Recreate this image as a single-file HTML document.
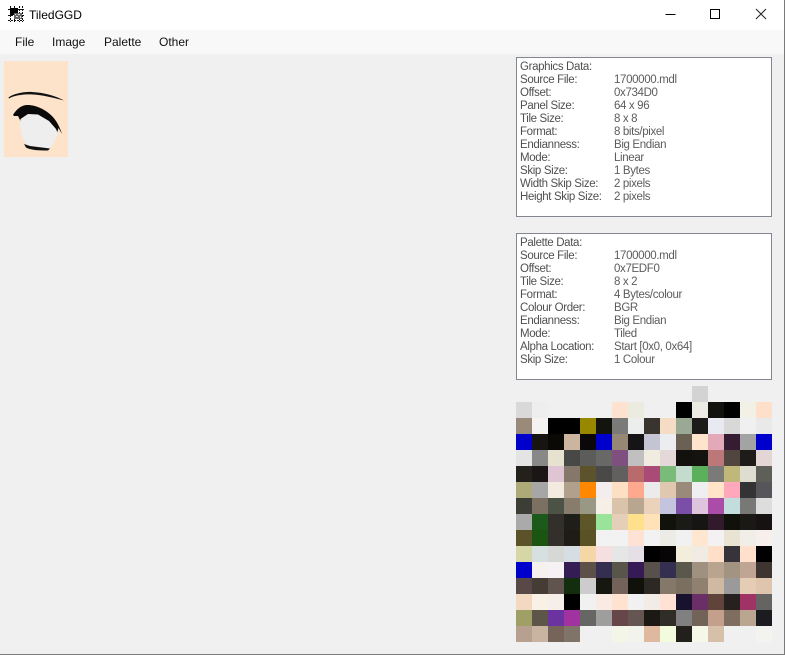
<!DOCTYPE html>
<html>
<head>
<meta charset="utf-8">
<style>
html,body{margin:0;padding:0;width:785px;height:655px;overflow:hidden;background:#f0f0f0;font-family:"Liberation Sans",sans-serif;}
.abs{position:absolute;}
#title{left:0;top:0;width:785px;height:30px;background:#fff;}
#ttext{left:29px;top:7px;font-size:12px;line-height:16px;color:#000;}
#menu{left:0;top:30px;width:785px;height:24px;background:#f8f8f8;}
.m{position:absolute;top:35px;font-size:12px;line-height:14px;color:#111;}
.box{position:absolute;left:516px;width:254px;background:#fff;border:1px solid #828790;}
.t{position:absolute;margin-top:1px;font-size:11.5px;letter-spacing:-0.35px;line-height:13px;color:#505050;white-space:nowrap;}
.v{color:#5c5c5c;}
#rb{left:784px;top:0;width:1px;height:655px;background:#7a7a7a;}
#bb{left:0;top:654px;width:785px;height:1px;background:#7a7a7a;}
</style>
</head>
<body>
<div class="abs" id="title"></div>
<svg class="abs" style="left:7px;top:5px" width="18" height="18" viewBox="7 5 18 18" shape-rendering="crispEdges">
<path d="M10.500 6v16M14.500 6v16M19.500 6v16M22.500 6v16M8 9.500h16M8 15.500h16M8 20.500h16" stroke="#111" stroke-width="1" stroke-dasharray="2 1" fill="none"/>
<rect x="10" y="8" width="8" height="7" fill="#000"/>
<rect x="14" y="13" width="8" height="6" fill="#666"/>
<path d="M15 14h1v1h-1zM18 14h2v1h-2zM16 16h2v1h-2zM20 16h1v2h-1z" fill="#ddd"/>
</svg>
<div class="abs" id="ttext">TiledGGD</div>
<svg class="abs" style="left:660px;top:0" width="125" height="30" viewBox="0 0 125 30">
<path d="M5.500 14.500h10" stroke="#000" stroke-width="1" fill="none"/>
<rect x="50.500" y="9.500" width="9" height="9" stroke="#000" stroke-width="1" fill="none"/>
<path d="M96 9l10 10M106 9l-10 10" stroke="#222" stroke-width="1" fill="none"/>
</svg>
<div class="abs" id="menu"></div>
<div class="m" style="left:15px">File</div>
<div class="m" style="left:52px">Image</div>
<div class="m" style="left:104px">Palette</div>
<div class="m" style="left:159px">Other</div>

<svg class="abs" style="left:4px;top:61px" width="64" height="96" viewBox="4 61 64 96">
<rect x="4" y="61" width="64" height="96" fill="#fee3cb"/>
<path d="M8.500 97.500C14 93.500 24 91.500 32 92C44 92.500 56 96 64 100.500C54 97.800 42 94.800 31 94.400C22 94.200 14 95.500 9 98.500Z" fill="#111"/>
<path d="M13 115C16 110 20 106 26 105C36 104.500 46 110 52 116C57 121 60 128 62 134L58.500 128L57 133L49 122L38 115L28 115L21 122L18 116L14 116Z" fill="#0a0a0a"/>
<path d="M20.500 119L28 114L38 114.500L49 121L56 129L58 134L54 142L50 149L26 145L22 136L20 126Z" fill="#eeeeee"/>
<path d="M24 144L30 146L50 148.500L48 150.500C38 150.500 30 150 26 147.500Z" fill="#111"/>
</svg>

<div class="box" style="top:57px;height:158px"></div>
<div class="t" style="left:520px;top:60px">Graphics Data:</div>
<div class="t" style="left:520px;top:73px">Source File:</div><div class="t v" style="left:614px;top:73px">1700000.mdl</div>
<div class="t" style="left:520px;top:86px">Offset:</div><div class="t v" style="left:614px;top:86px">0x734D0</div>
<div class="t" style="left:520px;top:99px">Panel Size:</div><div class="t v" style="left:614px;top:99px">64 x 96</div>
<div class="t" style="left:520px;top:112px">Tile Size:</div><div class="t v" style="left:614px;top:112px">8 x 8</div>
<div class="t" style="left:520px;top:125px">Format:</div><div class="t v" style="left:614px;top:125px">8 bits/pixel</div>
<div class="t" style="left:520px;top:138px">Endianness:</div><div class="t v" style="left:614px;top:138px">Big Endian</div>
<div class="t" style="left:520px;top:151px">Mode:</div><div class="t v" style="left:614px;top:151px">Linear</div>
<div class="t" style="left:520px;top:164px">Skip Size:</div><div class="t v" style="left:614px;top:164px">1 Bytes</div>
<div class="t" style="left:520px;top:177px">Width Skip Size:</div><div class="t v" style="left:614px;top:177px">2 pixels</div>
<div class="t" style="left:520px;top:190px">Height Skip Size:</div><div class="t v" style="left:614px;top:190px">2 pixels</div>

<div class="box" style="top:233px;height:145px"></div>
<div class="t" style="left:520px;top:236px">Palette Data:</div>
<div class="t" style="left:520px;top:249px">Source File:</div><div class="t v" style="left:614px;top:249px">1700000.mdl</div>
<div class="t" style="left:520px;top:262px">Offset:</div><div class="t v" style="left:614px;top:262px">0x7EDF0</div>
<div class="t" style="left:520px;top:275px">Tile Size:</div><div class="t v" style="left:614px;top:275px">8 x 2</div>
<div class="t" style="left:520px;top:288px">Format:</div><div class="t v" style="left:614px;top:288px">4 Bytes/colour</div>
<div class="t" style="left:520px;top:301px">Colour Order:</div><div class="t v" style="left:614px;top:301px">BGR</div>
<div class="t" style="left:520px;top:314px">Endianness:</div><div class="t v" style="left:614px;top:314px">Big Endian</div>
<div class="t" style="left:520px;top:327px">Mode:</div><div class="t v" style="left:614px;top:327px">Tiled</div>
<div class="t" style="left:520px;top:340px">Alpha Location:</div><div class="t v" style="left:614px;top:340px">Start [0x0, 0x64]</div>
<div class="t" style="left:520px;top:353px">Skip Size:</div><div class="t v" style="left:614px;top:353px">1 Colour</div>

<svg class="abs" style="left:516px;top:386px" width="256" height="256" viewBox="0 0 16 16" shape-rendering="crispEdges">
<rect x="11" y="0" width="1" height="1" fill="#d3d3d3"/>
<g transform="translate(0,1)"><rect x="0" width="1" height="1" fill="#d9d9d9"/><rect x="1" width="1" height="1" fill="#eeeeee"/><rect x="6" width="1" height="1" fill="#fde2d0"/><rect x="7" width="1" height="1" fill="#ecebdf"/><rect x="10" width="1" height="1" fill="#000000"/><rect x="11" width="1" height="1" fill="#eceae3"/><rect x="12" width="1" height="1" fill="#12110d"/><rect x="13" width="1" height="1" fill="#000000"/><rect x="14" width="1" height="1" fill="#f3f1e5"/><rect x="15" width="1" height="1" fill="#fedfc9"/></g>
<g transform="translate(0,2)"><rect x="0" width="1" height="1" fill="#9a8a7a"/><rect x="1" width="1" height="1" fill="#f5f3f1"/><rect x="2" width="1" height="1" fill="#000000"/><rect x="3" width="1" height="1" fill="#000000"/><rect x="4" width="1" height="1" fill="#988800"/><rect x="5" width="1" height="1" fill="#14140f"/><rect x="6" width="1" height="1" fill="#7a7a78"/><rect x="7" width="1" height="1" fill="#eceeee"/><rect x="8" width="1" height="1" fill="#3a342e"/><rect x="9" width="1" height="1" fill="#f5dcc4"/><rect x="10" width="1" height="1" fill="#9aa994"/><rect x="11" width="1" height="1" fill="#1c1b19"/><rect x="12" width="1" height="1" fill="#e9e9f2"/><rect x="13" width="1" height="1" fill="#d8d8d8"/><rect x="14" width="1" height="1" fill="#f0f0f0"/><rect x="15" width="1" height="1" fill="#e9e9e9"/></g>
<g transform="translate(0,3)"><rect x="0" width="1" height="1" fill="#0000cc"/><rect x="1" width="1" height="1" fill="#171412"/><rect x="2" width="1" height="1" fill="#0a0906"/><rect x="3" width="1" height="1" fill="#cbb59e"/><rect x="4" width="1" height="1" fill="#0a0808"/><rect x="5" width="1" height="1" fill="#0000cc"/><rect x="6" width="1" height="1" fill="#968874"/><rect x="7" width="1" height="1" fill="#161415"/><rect x="8" width="1" height="1" fill="#c4c4d3"/><rect x="9" width="1" height="1" fill="#ecedf0"/><rect x="10" width="1" height="1" fill="#6b6054"/><rect x="11" width="1" height="1" fill="#fee3cd"/><rect x="12" width="1" height="1" fill="#e3a9b9"/><rect x="13" width="1" height="1" fill="#351c33"/><rect x="14" width="1" height="1" fill="#a3a3a3"/><rect x="15" width="1" height="1" fill="#0000cc"/></g>
<g transform="translate(0,4)"><rect x="0" width="1" height="1" fill="#e4e4e4"/><rect x="1" width="1" height="1" fill="#888888"/><rect x="2" width="1" height="1" fill="#e7e1d0"/><rect x="3" width="1" height="1" fill="#484846"/><rect x="4" width="1" height="1" fill="#5c5c5a"/><rect x="5" width="1" height="1" fill="#686866"/><rect x="6" width="1" height="1" fill="#7f4f7f"/><rect x="7" width="1" height="1" fill="#c0c0c0"/><rect x="8" width="1" height="1" fill="#f0ede0"/><rect x="9" width="1" height="1" fill="#e5d8d8"/><rect x="10" width="1" height="1" fill="#12110e"/><rect x="11" width="1" height="1" fill="#14130f"/><rect x="12" width="1" height="1" fill="#bc7878"/><rect x="13" width="1" height="1" fill="#50453f"/><rect x="14" width="1" height="1" fill="#1f1b18"/><rect x="15" width="1" height="1" fill="#e5d6d6"/></g>
<g transform="translate(0,5)"><rect x="0" width="1" height="1" fill="#24211c"/><rect x="1" width="1" height="1" fill="#1a1615"/><rect x="2" width="1" height="1" fill="#dfc5d3"/><rect x="3" width="1" height="1" fill="#85786a"/><rect x="4" width="1" height="1" fill="#5c532c"/><rect x="5" width="1" height="1" fill="#4a4947"/><rect x="6" width="1" height="1" fill="#61605e"/><rect x="7" width="1" height="1" fill="#b96b6b"/><rect x="8" width="1" height="1" fill="#aa4b77"/><rect x="9" width="1" height="1" fill="#7abb7a"/><rect x="10" width="1" height="1" fill="#c3dcce"/><rect x="11" width="1" height="1" fill="#5bb05b"/><rect x="12" width="1" height="1" fill="#7a7a78"/><rect x="13" width="1" height="1" fill="#bfb878"/><rect x="14" width="1" height="1" fill="#deddd0"/><rect x="15" width="1" height="1" fill="#5f5f5a"/></g>
<g transform="translate(0,6)"><rect x="0" width="1" height="1" fill="#aeaa78"/><rect x="1" width="1" height="1" fill="#a6a6a6"/><rect x="2" width="1" height="1" fill="#f3ebe0"/><rect x="3" width="1" height="1" fill="#b0a08c"/><rect x="4" width="1" height="1" fill="#ff8800"/><rect x="5" width="1" height="1" fill="#f3eded"/><rect x="6" width="1" height="1" fill="#fde0c3"/><rect x="7" width="1" height="1" fill="#ffa890"/><rect x="8" width="1" height="1" fill="#ebebeb"/><rect x="9" width="1" height="1" fill="#e0c8b0"/><rect x="10" width="1" height="1" fill="#9a8a7a"/><rect x="11" width="1" height="1" fill="#efeef0"/><rect x="12" width="1" height="1" fill="#ffe4c8"/><rect x="13" width="1" height="1" fill="#ffa8bb"/><rect x="14" width="1" height="1" fill="#333333"/><rect x="15" width="1" height="1" fill="#55555a"/></g>
<g transform="translate(0,7)"><rect x="0" width="1" height="1" fill="#3c3e36"/><rect x="1" width="1" height="1" fill="#7c7062"/><rect x="2" width="1" height="1" fill="#4c5245"/><rect x="3" width="1" height="1" fill="#887c6c"/><rect x="4" width="1" height="1" fill="#999886"/><rect x="5" width="1" height="1" fill="#f5efe8"/><rect x="6" width="1" height="1" fill="#d9c3ab"/><rect x="7" width="1" height="1" fill="#b8a690"/><rect x="8" width="1" height="1" fill="#ebd3bb"/><rect x="9" width="1" height="1" fill="#c4c4de"/><rect x="10" width="1" height="1" fill="#7b4fa8"/><rect x="11" width="1" height="1" fill="#dfc4de"/><rect x="12" width="1" height="1" fill="#aa4ca8"/><rect x="13" width="1" height="1" fill="#c3dcdc"/><rect x="14" width="1" height="1" fill="#787876"/><rect x="15" width="1" height="1" fill="#dddddd"/></g>
<g transform="translate(0,8)"><rect x="0" width="1" height="1" fill="#aaaaaa"/><rect x="1" width="1" height="1" fill="#1c5a1c"/><rect x="2" width="1" height="1" fill="#33302c"/><rect x="3" width="1" height="1" fill="#201e19"/><rect x="4" width="1" height="1" fill="#5c5629"/><rect x="5" width="1" height="1" fill="#99e499"/><rect x="6" width="1" height="1" fill="#e6cfb8"/><rect x="7" width="1" height="1" fill="#ffe08c"/><rect x="8" width="1" height="1" fill="#ffe2b8"/><rect x="9" width="1" height="1" fill="#12120d"/><rect x="10" width="1" height="1" fill="#1a1a17"/><rect x="11" width="1" height="1" fill="#171414"/><rect x="12" width="1" height="1" fill="#321a2d"/><rect x="13" width="1" height="1" fill="#11110c"/><rect x="14" width="1" height="1" fill="#1b1916"/><rect x="15" width="1" height="1" fill="#151211"/></g>
<g transform="translate(0,9)"><rect x="0" width="1" height="1" fill="#5c5229"/><rect x="1" width="1" height="1" fill="#1b5512"/><rect x="2" width="1" height="1" fill="#33302b"/><rect x="3" width="1" height="1" fill="#1f1c16"/><rect x="4" width="1" height="1" fill="#5a5225"/><rect x="5" width="1" height="1" fill="#f2f2f2"/><rect x="6" width="1" height="1" fill="#f2f2f2"/><rect x="7" width="1" height="1" fill="#fee2d3"/><rect x="8" width="1" height="1" fill="#f2f2f2"/><rect x="9" width="1" height="1" fill="#ecebe6"/><rect x="10" width="1" height="1" fill="#f1f1f1"/><rect x="11" width="1" height="1" fill="#ffe6d0"/><rect x="12" width="1" height="1" fill="#f3f1f1"/><rect x="13" width="1" height="1" fill="#e9e3d4"/><rect x="14" width="1" height="1" fill="#f0eee6"/><rect x="15" width="1" height="1" fill="#f6efec"/></g>
<g transform="translate(0,10)"><rect x="0" width="1" height="1" fill="#d6d7a6"/><rect x="1" width="1" height="1" fill="#d6e0e0"/><rect x="2" width="1" height="1" fill="#d6d8d6"/><rect x="3" width="1" height="1" fill="#d6dee3"/><rect x="4" width="1" height="1" fill="#f5d6a6"/><rect x="5" width="1" height="1" fill="#f5dfe0"/><rect x="6" width="1" height="1" fill="#e6e6e6"/><rect x="7" width="1" height="1" fill="#e5e0e5"/><rect x="8" width="1" height="1" fill="#000000"/><rect x="9" width="1" height="1" fill="#070506"/><rect x="10" width="1" height="1" fill="#f3eddb"/><rect x="11" width="1" height="1" fill="#f0ebe3"/><rect x="12" width="1" height="1" fill="#ffdfc8"/><rect x="13" width="1" height="1" fill="#36343a"/><rect x="14" width="1" height="1" fill="#ffe0cc"/><rect x="15" width="1" height="1" fill="#000000"/></g>
<g transform="translate(0,11)"><rect x="0" width="1" height="1" fill="#0000cc"/><rect x="1" width="1" height="1" fill="#f6f1ef"/><rect x="2" width="1" height="1" fill="#f5f1f5"/><rect x="3" width="1" height="1" fill="#341c55"/><rect x="4" width="1" height="1" fill="#5c5049"/><rect x="5" width="1" height="1" fill="#342e50"/><rect x="6" width="1" height="1" fill="#58564b"/><rect x="7" width="1" height="1" fill="#361a55"/><rect x="8" width="1" height="1" fill="#58504a"/><rect x="9" width="1" height="1" fill="#342e50"/><rect x="10" width="1" height="1" fill="#5a584c"/><rect x="11" width="1" height="1" fill="#a09080"/><rect x="12" width="1" height="1" fill="#b8a48f"/><rect x="13" width="1" height="1" fill="#a39482"/><rect x="14" width="1" height="1" fill="#c0a595"/><rect x="15" width="1" height="1" fill="#3e3430"/></g>
<g transform="translate(0,12)"><rect x="0" width="1" height="1" fill="#584848"/><rect x="1" width="1" height="1" fill="#443c35"/><rect x="2" width="1" height="1" fill="#61534d"/><rect x="3" width="1" height="1" fill="#132e0f"/><rect x="4" width="1" height="1" fill="#cccccc"/><rect x="5" width="1" height="1" fill="#171712"/><rect x="6" width="1" height="1" fill="#72625a"/><rect x="7" width="1" height="1" fill="#11110c"/><rect x="8" width="1" height="1" fill="#2c2823"/><rect x="9" width="1" height="1" fill="#847869"/><rect x="10" width="1" height="1" fill="#7b6f62"/><rect x="11" width="1" height="1" fill="#8f806f"/><rect x="12" width="1" height="1" fill="#cfb9a3"/><rect x="13" width="1" height="1" fill="#9a9a9a"/><rect x="14" width="1" height="1" fill="#e5cdb5"/><rect x="15" width="1" height="1" fill="#dfc5ad"/></g>
<g transform="translate(0,13)"><rect x="0" width="1" height="1" fill="#f3d9c1"/><rect x="1" width="1" height="1" fill="#f9f0e6"/><rect x="2" width="1" height="1" fill="#f6efe9"/><rect x="3" width="1" height="1" fill="#000000"/><rect x="4" width="1" height="1" fill="#f1f1f1"/><rect x="5" width="1" height="1" fill="#f9ebe3"/><rect x="6" width="1" height="1" fill="#ffe2d0"/><rect x="7" width="1" height="1" fill="#f1f1f1"/><rect x="8" width="1" height="1" fill="#f2ebe6"/><rect x="9" width="1" height="1" fill="#ffe2d3"/><rect x="10" width="1" height="1" fill="#18122e"/><rect x="11" width="1" height="1" fill="#6a2f66"/><rect x="12" width="1" height="1" fill="#60443c"/><rect x="13" width="1" height="1" fill="#26211e"/><rect x="14" width="1" height="1" fill="#a03366"/><rect x="15" width="1" height="1" fill="#666462"/></g>
<g transform="translate(0,14)"><rect x="0" width="1" height="1" fill="#a0a066"/><rect x="1" width="1" height="1" fill="#5c5548"/><rect x="2" width="1" height="1" fill="#6a33a0"/><rect x="3" width="1" height="1" fill="#a033a0"/><rect x="4" width="1" height="1" fill="#666664"/><rect x="5" width="1" height="1" fill="#9e9e9c"/><rect x="6" width="1" height="1" fill="#664649"/><rect x="7" width="1" height="1" fill="#665652"/><rect x="8" width="1" height="1" fill="#1c1814"/><rect x="9" width="1" height="1" fill="#302d26"/><rect x="10" width="1" height="1" fill="#808080"/><rect x="11" width="1" height="1" fill="#726358"/><rect x="12" width="1" height="1" fill="#c4a08c"/><rect x="13" width="1" height="1" fill="#7f6e60"/><rect x="14" width="1" height="1" fill="#baa690"/><rect x="15" width="1" height="1" fill="#1c1b20"/></g>
<g transform="translate(0,15)"><rect x="0" width="1" height="1" fill="#b8a090"/><rect x="1" width="1" height="1" fill="#c8b4a0"/><rect x="2" width="1" height="1" fill="#766458"/><rect x="3" width="1" height="1" fill="#807468"/><rect x="6" width="1" height="1" fill="#f3f6e6"/><rect x="7" width="1" height="1" fill="#f3f3ee"/><rect x="8" width="1" height="1" fill="#dfb8a0"/><rect x="9" width="1" height="1" fill="#f3fbdf"/><rect x="10" width="1" height="1" fill="#231f1a"/><rect x="11" width="1" height="1" fill="#f6f6e9"/><rect x="12" width="1" height="1" fill="#d6c0aa"/><rect x="15" width="1" height="1" fill="#f3f3ef"/></g>
</svg>
<div class="abs" id="rb"></div>
<div class="abs" id="bb"></div>
</body>
</html>
